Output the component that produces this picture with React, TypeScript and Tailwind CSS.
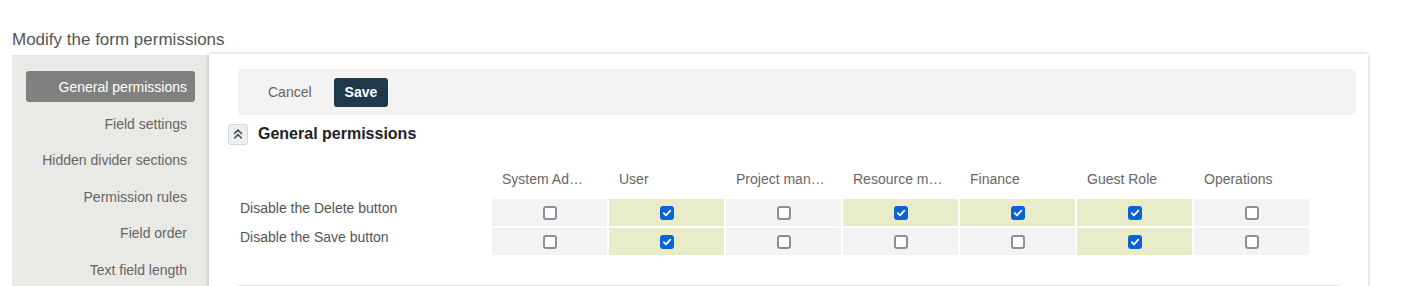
import { ChevronsUp } from 'lucide-react'

const menu = [
  'General permissions',
  'Field settings',
  'Hidden divider sections',
  'Permission rules',
  'Field order',
  'Text field length',
]

const roles = ['System Ad…', 'User', 'Project man…', 'Resource m…', 'Finance', 'Guest Role', 'Operations']

const rows = [
  { label: 'Disable the Delete button', values: [false, true, false, true, true, true, false] },
  { label: 'Disable the Save button', values: [false, true, false, false, false, true, false] },
]

function Check({ on }: { on: boolean }) {
  if (!on) return <span className="block h-[14px] w-[14px] rounded-[3px] border-2 border-[#8f8d99] bg-white" />
  return (
    <span className="flex h-[14px] w-[14px] items-center justify-center rounded-[3px] bg-[#0b62d6]">
      <svg width="10" height="10" viewBox="0 0 10 10" fill="none">
        <path d="M1.8 5.2 4 7.3 8.3 2.6" stroke="white" strokeWidth="1.8" strokeLinecap="round" strokeLinejoin="round" />
      </svg>
    </span>
  )
}

export default function App() {
  return (
    <div className="h-[286px] overflow-hidden bg-white font-['Liberation_Sans',Arial,sans-serif] text-[#555]">
      <h1 className="pl-[12px] pt-[31px] text-[17px] leading-[18px] text-[#555]">Modify the form permissions</h1>

      <div className="mt-[5px] ml-[12px] flex items-start">
        <nav className="mt-[1px] flex h-[260px] w-[197px] shrink-0 flex-col gap-[5.6px] bg-[#e9e9e5] px-[14px] pt-[16px]">
          {menu.map((m, i) => (
            <div
              key={m}
              className={`flex h-[31px] items-center justify-end rounded-[3px] pr-[8px] pt-[2px] text-[14px] ${
                i === 0 ? 'bg-[#808080] text-white' : 'text-[#666]'
              }`}
            >
              {m}
            </div>
          ))}
        </nav>

        <section className="h-[260px] w-[1159px] shrink-0 bg-white pl-[19px] pr-[12px] pt-[15px] shadow-[0_0_4px_rgba(0,0,0,0.25)]">
          <div className="ml-[10px] flex h-[46px] items-center rounded-[4px] bg-[#f3f3f3] pl-[30px]">
            <button className="text-[14px] text-[#666]">Cancel</button>
            <button className="ml-[22px] h-[29px] rounded-[3px] bg-[#1f394c] px-[11px] text-[14px] font-bold text-white">
              Save
            </button>
          </div>

          <div className="mt-[7px] flex items-center">
            <span className="flex h-[21px] w-[20px] items-center justify-center rounded-[3px] border border-[#d5d8dc] bg-[#eceff3] text-[#555]">
              <ChevronsUp size={16} strokeWidth={2.6} />
            </span>
            <h2 className="ml-[10px] text-[16px] font-bold text-[#222]">General permissions</h2>
          </div>

          <div className="ml-[12px] mt-[23px]">
            <div className="flex h-[20px] items-center">
              <div className="w-[252px] shrink-0" />
              <div className="flex gap-[2px]">
                {roles.map((r) => (
                  <div key={r} className="w-[115px] truncate pl-[10px] text-[14px] text-[#666]">
                    {r}
                  </div>
                ))}
              </div>
            </div>

            <div className="mt-[10px] flex flex-col gap-[2px]">
              {rows.map((row) => (
                <div key={row.label} className="flex h-[27px]">
                  <div className="w-[252px] shrink-0 pt-[1px] text-[14px] leading-[16px] text-[#555]">{row.label}</div>
                  <div className="flex gap-[2px]">
                    {row.values.map((v, i) => (
                      <div
                        key={i}
                        className={`flex w-[115px] items-center justify-center ${v ? 'bg-[#e8ecc8]' : 'bg-[#f3f3f3]'}`}
                      >
                        <Check on={v} />
                      </div>
                    ))}
                  </div>
                </div>
              ))}
            </div>
          </div>

          <div className="ml-[10px] mt-[30px] h-px w-[1102px] bg-[#e6e6e6]" />
        </section>
      </div>
    </div>
  )
}
